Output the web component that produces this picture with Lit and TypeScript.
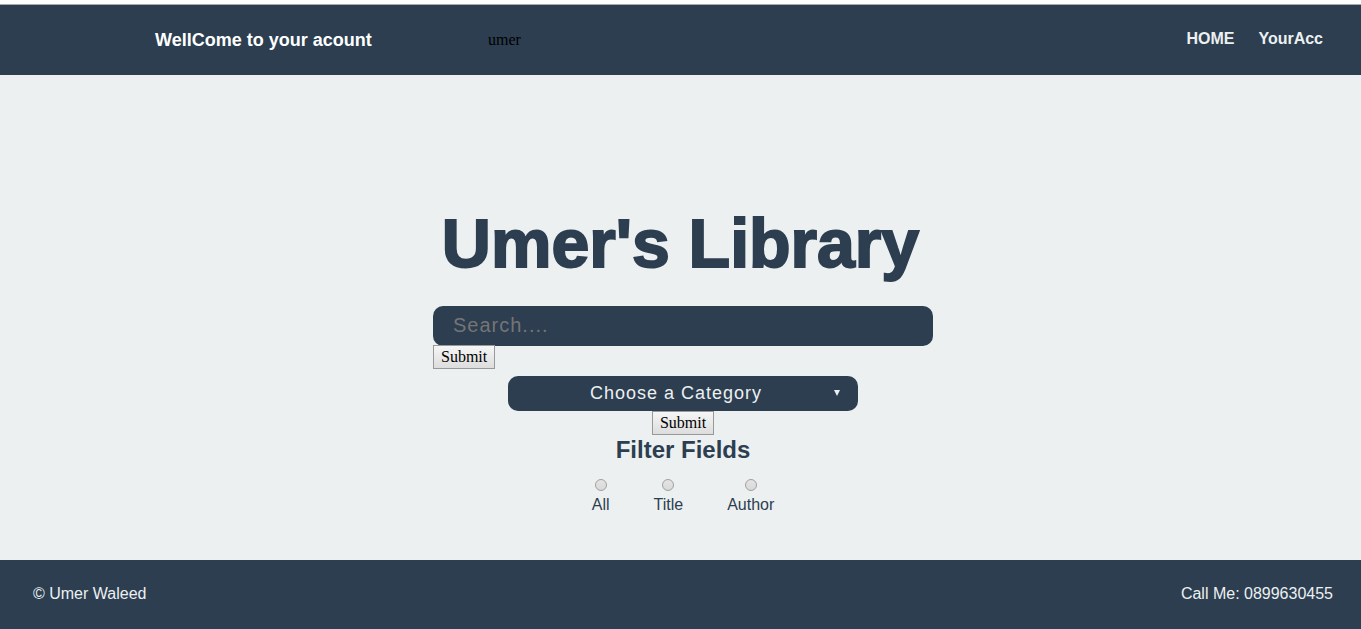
import { LitElement, html, css } from "lit";
import { customElement, state } from "lit/decorators.js";

@customElement("app-root")
export class AppRoot extends LitElement {
  static styles = css`
    :host {
      display: flex;
      flex-direction: column;
      box-sizing: border-box;
      min-height: 100vh;
      padding-top: 4px;
      background: #fff;
      color: #2c3e50;
      font-family: "Liberation Sans", Arial, sans-serif;
      font-size: 16px;
      line-height: 18px;
    }
    .header {
      display: flex;
      align-items: flex-start;
      box-sizing: border-box;
      min-height: 71px;
      padding: 25px 38px 0 155px;
      border-top: 1px solid #aaa;
      background: #2c3e50;
    }
    .welcome {
      width: 333px;
      margin: 0;
      font-size: 18px;
      font-weight: bold;
      line-height: 20px;
      color: #fff;
    }
    .user {
      font: 16px/20px "Liberation Serif", serif;
      color: #000;
    }
    .nav {
      display: flex;
      gap: 24px;
      margin-left: auto;
    }
    .nav a {
      color: #ecf0f1;
      font-weight: bold;
      text-decoration: none;
    }
    .main {
      flex: 1;
      display: flex;
      flex-direction: column;
      align-items: center;
      padding: 123px 0 45px;
      background: #ecf0f1;
    }
    .title {
      margin: 0;
      font-size: 68px;
      font-weight: bold;
      line-height: 90px;
      -webkit-text-stroke: 2px #2c3e50;
    }
    .controls {
      display: flex;
      flex-direction: column;
      align-items: center;
      padding: 18px 0 0 5px;
    }
    .search {
      display: flex;
      flex-direction: column;
      align-items: flex-start;
      width: 500px;
      max-width: 100vw;
    }
    .search-box {
      box-sizing: border-box;
      width: 100%;
      height: 40px;
      padding: 0 20px 2px;
      border: 0;
      border-radius: 10px;
      background: #2c3e50;
      color: #ecf0f1;
      font: 20px/24px "Liberation Sans", Arial, sans-serif;
      letter-spacing: 1px;
    }
    .search-box::placeholder {
      color: #757575;
      opacity: 1;
    }
    .submit {
      box-sizing: border-box;
      height: 24px;
      margin: 0;
      padding: 0 7px;
      border: 1px solid #999;
      border-radius: 0;
      background: linear-gradient(#f6f6f6, #dddddd);
      color: #000;
      font: 16px/18px "Liberation Serif", serif;
    }
    .search .submit {
      margin-top: -1px;
    }
    .category {
      display: flex;
      flex-direction: column;
      align-items: center;
      margin-top: 7px;
    }
    .select-wrap {
      position: relative;
      width: 350px;
    }
    .select-wrap select {
      appearance: none;
      display: block;
      box-sizing: border-box;
      width: 100%;
      height: 35px;
      padding: 0 14px 2px 0;
      border: 0;
      border-radius: 10px;
      background: #2c3e50;
      color: #ecf0f1;
      font: 18px/22px "Liberation Sans", Arial, sans-serif;
      letter-spacing: 1px;
      text-align: center;
      text-align-last: center;
    }
    .arrow {
      position: absolute;
      top: 14px;
      right: 18px;
      width: 6px;
      height: 6px;
      fill: #ecf0f1;
      pointer-events: none;
    }
    .filters {
      display: flex;
      justify-content: center;
      gap: 44px;
      margin: 0;
      padding: 0;
      border: 0;
    }
    .filters legend {
      width: 100%;
      padding: 0 0 14px;
      font-size: 24px;
      font-weight: bold;
      line-height: 30px;
      text-align: center;
    }
    .choice {
      display: flex;
      flex-direction: column;
      align-items: center;
      gap: 5px;
    }
    .choice input {
      appearance: none;
      box-sizing: border-box;
      width: 12px;
      height: 12px;
      margin: 0;
      border: 1px solid #a0a0a0;
      border-radius: 50%;
      background: linear-gradient(#e4e4e4, #d9d9d9);
    }
    .choice input:checked {
      background: radial-gradient(#444 35%, #ddd 40%);
    }
    .footer {
      display: flex;
      justify-content: space-between;
      box-sizing: border-box;
      min-height: 69px;
      padding: 25px 28px 26px 33px;
      background: #2c3e50;
      color: #ecf0f1;
    }
  `;

  @state() private field = "";

  private readonly fields = ["All", "Title", "Author"];

  private stay(event: Event) {
    event.preventDefault();
  }

  render() {
    return html`
      <header class="header">
        <h2 class="welcome">WellCome to your acount</h2>
        <span class="user">umer</span>
        <nav class="nav"><a href="#home">HOME</a><a href="#account">YourAcc</a></nav>
      </header>
      <main class="main">
        <h1 class="title">Umer's Library</h1>
        <div class="controls">
          <form class="search" @submit=${this.stay}>
            <input class="search-box" type="text" name="search" aria-label="Search" placeholder="Search...." />
            <button class="submit" type="submit">Submit</button>
          </form>
          <form class="category" @submit=${this.stay}>
            <div class="select-wrap">
              <select name="category" aria-label="Category">
                <option>Choose a Category</option>
              </select>
              <svg class="arrow" viewBox="0 0 6 6" aria-hidden="true"><path d="M0 0h6L3 6z" /></svg>
            </div>
            <button class="submit" type="submit">Submit</button>
          </form>
          <fieldset class="filters">
            <legend>Filter Fields</legend>
            ${this.fields.map(
              (name) => html`
                <label class="choice">
                  <input
                    type="radio"
                    name="field"
                    .checked=${this.field === name}
                    @change=${() => (this.field = name)}
                  />
                  ${name}
                </label>
              `
            )}
          </fieldset>
        </div>
      </main>
      <footer class="footer">
        <span>© Umer Waleed</span>
        <span>Call Me: 0899630455</span>
      </footer>
    `;
  }
}
